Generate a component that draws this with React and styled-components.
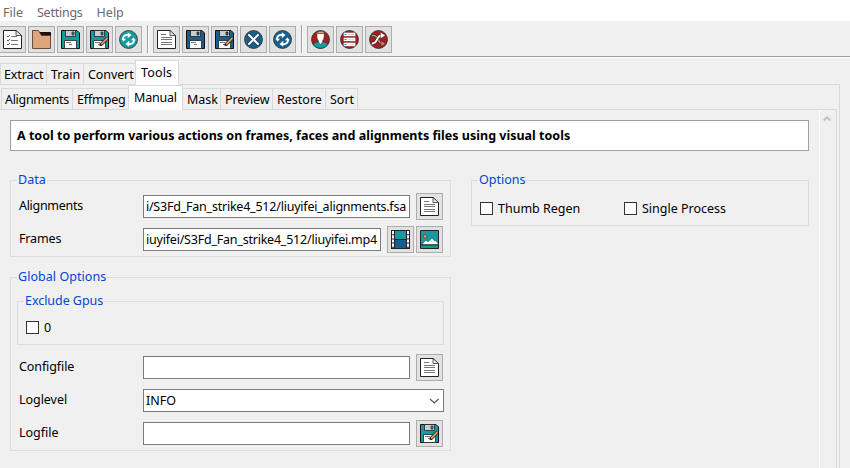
import React from "react";
import styled, { createGlobalStyle } from "styled-components";

const Global = createGlobalStyle`
  * { box-sizing: border-box; }
  body { margin: 0; background: #f0f0f0; overflow: hidden; }
`;

const Window = styled.div`
  width: 850px;
  height: 468px;
  overflow: hidden;
  display: flex;
  flex-direction: column;
  background: #f0f0f0;
  color: #000;
  font: 12.5px/16px "Noto Sans", "Open Sans", sans-serif;
  white-space: nowrap;
`;

const Text = styled.span`
  letter-spacing: ${(p) => p.$ls || 0}px;
`;

const MenuBar = styled.nav`
  height: 21px;
  flex: none;
  display: flex;
  gap: 14px;
  padding: 5px 0 0 3px;
  background: #fff;
  color: #6a6a6a;
`;

const Toolbar = styled.div`
  height: 37px;
  flex: none;
  display: flex;
  gap: 2px;
  margin-left: -1px;
  padding-top: 5px;
  border-bottom: 1px solid #fff;
  box-shadow: inset 0 -1px #a0a0a0;
`;

const Separator = styled.div`
  width: 2px;
  height: 28px;
  margin: -1px 2px 0 3px;
  background: linear-gradient(90deg, #a0a0a0 50%, #fff 50%);
`;

const IconButton = styled.button`
  width: 27px;
  height: 27px;
  flex: none;
  padding: 3px;
  border: 1px solid #adadad;
  background: #e1e1e1;
  svg { display: block; }
`;

const TabStrip = styled.div`
  display: flex;
  flex: none;
  align-items: flex-end;
  height: ${(p) => p.$h}px;
  width: ${(p) => p.$w}px;
  padding-left: ${(p) => p.$left}px;
  box-shadow: inset 0 -1px #d9d9d9;
`;

const Tab = styled.div`
  width: ${(p) => p.$w}px;
  height: ${(p) => (p.$active ? 25 : 22)}px;
  margin-right: ${(p) => (p.$active ? -1 : 0)}px;
  padding: ${(p) => (p.$active ? "4px 0 0 5px" : "3px 0 0 4px")};
  &:first-child { padding-left: 3px; }
  border: 1px solid #d9d9d9;
  border-right-width: ${(p) => (p.$last || p.$active ? 1 : 0)}px;
  border-bottom-color: ${(p) => (p.$active ? "#fff" : "#d9d9d9")};
  background: ${(p) => (p.$active ? "#fff" : "#f0f0f0")};
`;

const OuterPane = styled.main`
  width: 840px;
  flex: 1;
  border-right: 1px solid #d9d9d9;
`;

const InnerPane = styled.section`
  width: 837px;
  height: 358px;
  display: flex;
  border-right: 1px solid #d9d9d9;
`;

const Content = styled.div`
  width: 819px;
  padding: 10px 10px 0;
`;

const Scrollbar = styled.div`
  width: 17px;
  border-left: 1px solid #fff;
  padding: 5px 0 0 3px;
  svg { display: block; }
`;

const Banner = styled.div`
  height: 31px;
  width: 799px;
  padding: 7px 6px;
  border: 1px solid #a0a0a0;
  background: #fff;
  font-weight: 700;
`;

const Columns = styled.div`
  display: flex;
  gap: 20px;
  margin-top: 29px;
`;

const Column = styled.div`
  display: flex;
  flex-direction: column;
  gap: 20px;
  width: ${(p) => p.$w}px;
`;

const Group = styled.section`
  height: ${(p) => p.$h}px;
  border: 1px solid #dcdcdc;
`;

const GpuGroup = styled(Group)`
  width: 427px;
  margin: 16px 0 0 6px;
`;

const Legend = styled.h2`
  width: fit-content;
  height: 16px;
  margin: -9px 0 0 6px;
  padding: 0 1px;
  background: #f0f0f0;
  color: #0046d5;
  font: inherit;
`;

const Row = styled.div`
  display: flex;
  height: 27px;
  margin-top: ${(p) => p.$top || 6}px;
  padding-left: 8px;
`;

const Label = styled.label`
  width: 124px;
  flex: none;
  padding-top: 5px;
`;

const Field = styled.div`
  width: ${(p) => p.$w}px;
  height: 23px;
  margin: 2px 6px 0 0;
  padding: 3px 3px 3px 2px;
  flex: none;
  display: flex;
  justify-content: ${(p) => (p.$end ? "flex-end" : "space-between")};
  overflow: hidden;
  border: 1px solid #7a7a7a;
  background: #fff;
`;

const ButtonGap = styled.div`
  display: flex;
  gap: 2px;
`;

const CheckRow = styled.div`
  display: flex;
  padding: ${(p) => p.$pad};
`;

const Check = styled.label`
  display: flex;
  align-items: flex-start;
  gap: 5px;
  width: 144px;
  height: 16px;
`;

const Box = styled.span`
  width: 13px;
  height: 13px;
  margin-top: 1px;
  border: 1px solid #333;
  background: #fff;
`;

const Art = ({ children }) => (
  <svg width="19" height="19" viewBox="0 0 19 19">{children}</svg>
);

const Paper = () => (
  <>
    <path d="M.5.5H13L18.5 5.5V18.5H.5Z" fill="#fff" stroke="#222" />
    <path d="M13 .5V5.5H18.5Z" fill="#eee" stroke="#333" strokeWidth=".8" />
  </>
);

const DocIcon = () => (
  <Art>
    <Paper />
    <path d="M4 4.5H9M4 7.5H15M4 9.5H15M4 12.5H15M4 14.5H15" stroke="#777" />
  </Art>
);

const ListIcon = () => (
  <Art>
    <Paper />
    <path d="M8 6.5H14M8 10.5H15M8 14.5H15" stroke="#777" />
    <path d="M4 6l1 1 2-2M4 10l1 1 2-2M4 14l1 1 2-2" fill="none" stroke="#333" strokeWidth=".8" />
  </Art>
);

const FolderIcon = () => (
  <Art>
    <path d="M7 2.5H18.5V6H9Z" fill="#2a0d08" stroke="#111" />
    <path d="M.5 .5H6.5L9.5 5.5H18.5V18.5H.5Z" fill="#dfa57c" stroke="#4a3022" strokeWidth=".8" />
  </Art>
);

const SaveIcon = ({ color = "#139ba0", pencil }) => (
  <Art>
    <path d="M.5.5H16L18.5 3V18.5H.5Z" fill={color} stroke="#111" />
    <path d="M4.5 .5H14.5V6.5H4.5Z" fill="#ccc" stroke="#222" strokeWidth=".8" />
    <path d="M11 2H13V5H11Z" fill={color} stroke="#222" strokeWidth=".7" />
    <path d="M3.5 10.5H15.5V18.5H3.5Z" fill="#fff" stroke="#222" strokeWidth=".8" />
    <path d="M5 12.5H10M8 14.5H11" stroke="#777" />
    {pencil && (
      <>
        <path d="M10.5 15L17.5 8" stroke="#111" strokeWidth="3.2" />
        <path d="M11 14.5L17.5 8" stroke="#df9a65" strokeWidth="2" />
        <path d="M9.3 16.2l1.1-2.4 1.5 1.5Z" fill="#111" />
      </>
    )}
  </Art>
);

const Disc = ({ color, children }) => (
  <Art>
    <circle cx="9.5" cy="9.5" r="9" fill={color} stroke="#222" strokeWidth=".7" />
    {children}
  </Art>
);

const RefreshIcon = ({ color = "#139ba0" }) => (
  <Disc color={color}>
    <path d="M3 9.5H5C5 6.8 6.5 5.6 8.7 5.8V8.2L12.6 5 8.7 2.2V4C5 3.8 3 6 3 9.5Z" fill="#fff" />
    <path d="M2.2 8.8H7L4.6 11.5Z" fill="#fff" />
    <path d="M16 9.5H14C14 12.2 12.5 13.4 10.3 13.2V10.8L6.4 14 10.3 16.8V15C14 15.2 16 13 16 9.5Z" fill="#fff" />
    <path d="M16.8 10.2H12L14.4 7.5Z" fill="#fff" />
  </Disc>
);

const CloseIcon = () => (
  <Disc color="#195f8b">
    <path d="M5 5L14 14M14 5L5 14" stroke="#222" strokeWidth="3" strokeLinecap="round" />
    <path d="M5 5L14 14M14 5L5 14" stroke="#fff" strokeWidth="2.1" strokeLinecap="round" />
  </Disc>
);

const FaceIcon = () => (
  <Disc color="#a51d24">
    <path d="M2.2 14.5C3 12.3 5.5 11.8 7.5 12H11.5C13.5 11.8 16 12.3 16.8 14.5 14 19.5 5 19.5 2.2 14.5Z" fill="#139ba0" stroke="#222" strokeWidth=".5" />
    <path d="M5.8 3.5H13.2L13 7.5Q12.5 9.8 11.5 10.8V12L9.5 14.5 7.5 12V10.8Q6.4 9.6 6 7.5Z" fill="#fff" stroke="#3c1515" strokeWidth=".4" />
    <path d="M5.5 4Q6 1 10 1.2L12.5 1.5 13.5 3.8 9 3.4Z" fill="#dfa57c" stroke="#4a3022" strokeWidth=".5" />
  </Disc>
);

const StackIcon = () => (
  <Disc color="#a51d24">
    {[3, 8, 13].map((y) => (
      <g key={y}>
        <rect x="3.5" y={y - 0.5} width="12" height="3.8" fill="#fff" stroke="#552024" strokeWidth=".3" />
        <path d={`M4.5 ${y + 1.5}H6.5`} stroke="#139ba0" />
        <path d={`M8 ${y + 1.5}H14.5`} stroke="#ead2b0" strokeWidth=".8" />
      </g>
    ))}
  </Disc>
);

const ShuffleIcon = () => (
  <Disc color="#a51d24">
    <path d="M3 5.5H5.5C9 6 9 13 13 13.5" fill="none" stroke="#222" strokeWidth="2.6" />
    <path d="M3 5.5H5.5C9 6 9 13 13 13.5" fill="none" stroke="#d98a5b" strokeWidth="1.7" />
    <path d="M12 10.8L16.5 13.6 12 16.6Z" fill="#d98a5b" stroke="#222" strokeWidth=".5" />
    <path d="M2.8 13.5C9 14 7 6 12 5.5" fill="none" stroke="#222" strokeWidth="2.8" />
    <path d="M2.8 13.5C9 14 7 6 12 5.5" fill="none" stroke="#fff" strokeWidth="1.9" />
    <path d="M11.5 2.3L16.5 5.4 11.5 8.5Z" fill="#fff" stroke="#222" strokeWidth=".4" />
  </Disc>
);

const FilmIcon = () => (
  <Art>
    <path d="M0 0H19V19H0Z" fill="#222" />
    <path d="M4 1H15V9H4Z" fill="#139ba0" />
    <path d="M4 10H15V18H4Z" fill="#195f8b" />
    <path d="M2 1V18M17 1V18" stroke="#fff" strokeWidth="2" strokeDasharray="3.2 1" />
  </Art>
);

const PhotoIcon = () => (
  <Art>
    <path d="M.5.5H18.5V18.5H.5Z" fill="#139ba0" stroke="#222" />
    <path d="M1 15H18V18H1Z" fill="#0ba078" />
    <path d="M2 14.5L6 10 8 12 12 8 14.5 11 15.5 10.5 18 13.5V14.5Z" fill="#fff" stroke="#333" strokeWidth=".5" />
    <path d="M1 15H18" stroke="#222" strokeWidth=".8" />
    <circle cx="5" cy="6.5" r="1.8" fill="#df9a65" stroke="#5b4030" strokeWidth=".8" />
  </Art>
);

const toolGroups = [
  [<ListIcon />, <FolderIcon />, <SaveIcon />, <SaveIcon pencil />, <RefreshIcon />],
  [<DocIcon />, <SaveIcon color="#195f8b" />, <SaveIcon color="#195f8b" pencil />, <CloseIcon />, <RefreshIcon color="#195f8b" />],
  [<FaceIcon />, <StackIcon />, <ShuffleIcon />],
];

const mainTabs = [
  ["Extract", 46, -0.15], ["Train", 37], ["Convert", 52, -0.1], ["Tools", 44, 0.15, true],
];
const toolTabs = [
  ["Alignments", 71, -0.3], ["Effmpeg", 56, -0.15], ["Manual", 55, -0.2, true], ["Mask", 38],
  ["Preview", 52, -0.15], ["Restore", 53], ["Sort", 33],
];

const Tabs = ({ items, h, w, left }) => (
  <TabStrip $h={h} $w={w} $left={left}>
    {items.map(([name, width, ls, active], i) => (
      <Tab key={name} $w={width} $active={active} $last={i === items.length - 1}>
        <Text $ls={ls}>{name}</Text>
      </Tab>
    ))}
  </TabStrip>
);

export default function App() {
  return (
    <Window>
      <Global />
      <MenuBar>
        <Text>File</Text>
        <Text $ls={-0.25}>Settings</Text>
        <Text>Help</Text>
      </MenuBar>
      <Toolbar>
        {toolGroups.map((group, g) => (
          <React.Fragment key={g}>
            {g > 0 && <Separator />}
            {group.map((icon, i) => <IconButton key={i}>{icon}</IconButton>)}
          </React.Fragment>
        ))}
      </Toolbar>
      <Tabs items={mainTabs} h={27} w={840} left={0} />
      <OuterPane>
        <Tabs items={toolTabs} h={25} w={837} left={1} />
        <InnerPane>
          <Content>
            <Banner>
              <Text $ls={0.01}>A tool to perform various actions on frames, faces and alignments files using visual tools</Text>
            </Banner>
            <Columns>
              <Column $w={441}>
                <Group $h={77}>
                  <Legend><Text>Data</Text></Legend>
                  <Row $top={5}>
                    <Label><Text $ls={-0.3}>Alignments</Text></Label>
                    <Field $w={267} $end><Text $ls={-0.22}>i/S3Fd_Fan_strike4_512/liuyifei_alignments.fsa</Text></Field>
                    <IconButton><DocIcon /></IconButton>
                  </Row>
                  <Row>
                    <Label><Text $ls={-0.15}>Frames</Text></Label>
                    <Field $w={238} $end><Text $ls={-0.22}>iuyifei/S3Fd_Fan_strike4_512/liuyifei.mp4</Text></Field>
                    <ButtonGap>
                      <IconButton><FilmIcon /></IconButton>
                      <IconButton><PhotoIcon /></IconButton>
                    </ButtonGap>
                  </Row>
                </Group>
                <Group $h={174}>
                  <Legend><Text $ls={0.05}>Global Options</Text></Legend>
                  <GpuGroup $h={44}>
                    <Legend><Text $ls={-0.05}>Exclude Gpus</Text></Legend>
                    <CheckRow $pad="11px 0 0 8px"><Check><Box /><Text>0</Text></Check></CheckRow>
                  </GpuGroup>
                  <Row $top={9}>
                    <Label><Text $ls={-0.1}>Configfile</Text></Label>
                    <Field $w={267} />
                    <IconButton><DocIcon /></IconButton>
                  </Row>
                  <Row>
                    <Label><Text $ls={-0.05}>Loglevel</Text></Label>
                    <Field $w={301}>
                      <Text>INFO</Text>
                      <svg width="11" height="15" viewBox="0 0 11 15"><path d="M1 6L5.3 10L9.6 6" fill="none" stroke="#555" strokeWidth="1.1" /></svg>
                    </Field>
                  </Row>
                  <Row>
                    <Label><Text>Logfile</Text></Label>
                    <Field $w={267} />
                    <IconButton><SaveIcon pencil /></IconButton>
                  </Row>
                </Group>
              </Column>
              <Column $w={338}>
                <Group $h={46}>
                  <Legend><Text>Options</Text></Legend>
                  <CheckRow $pad="13px 0 0 8px">
                    <Check><Box /><Text>Thumb Regen</Text></Check>
                    <Check><Box /><Text>Single Process</Text></Check>
                  </CheckRow>
                </Group>
              </Column>
            </Columns>
          </Content>
          <Scrollbar>
            <svg width="8" height="7" viewBox="0 0 8 7"><path d="M.7 5.5L4 2.2L7.3 5.5" fill="none" stroke="#bdbdbd" strokeWidth="1.8" /></svg>
          </Scrollbar>
        </InnerPane>
      </OuterPane>
    </Window>
  );
}
